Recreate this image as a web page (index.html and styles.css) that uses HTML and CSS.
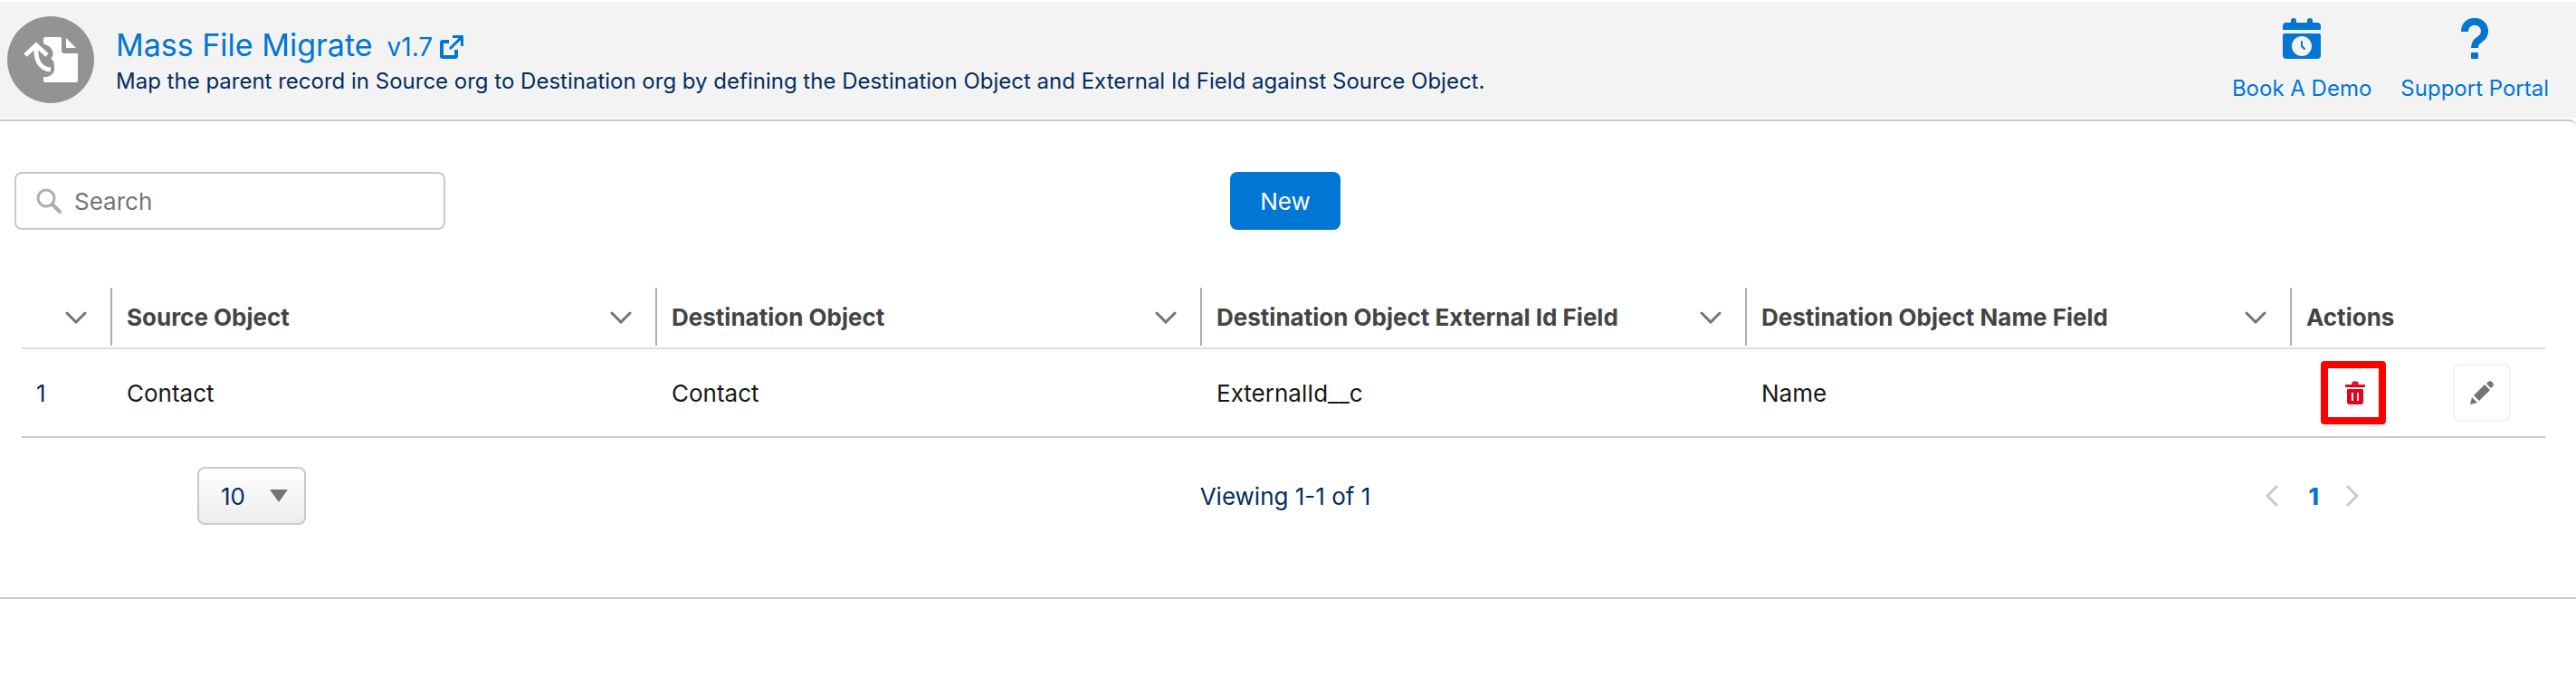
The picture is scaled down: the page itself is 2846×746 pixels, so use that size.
FILE: index.html
```html
<!DOCTYPE html>
<html lang="en">
<head>
  <meta charset="UTF-8">
  <meta name="viewport" content="width=device-width, initial-scale=1.0">
  <title>Mass File Migrate</title>
  <link rel="stylesheet" href="styles.css">
</head>
<body>

  <header class="page-header">
    <svg class="logo" viewBox="0 0 96 96" aria-hidden="true">
      <circle cx="48" cy="48" r="48" fill="#939393"/>
      <path d="M42 23h17q1 0 1 1v14q0 3 3 3h14q1 0 1 1v29q0 2-2 2H42q-2 0-2-2v-4c7 1 13-4 12-11 0-5-1-8-4-9 4-4 3-8 0-12-2-3-8-4-8-5V25q0-2 2-2z" fill="#fff"/>
      <path d="M65 24l11 11H66q-1 0-1-1z" fill="#fff"/>
      <path d="M20 43l12-11 12 11M33 36c-2 12 4 22 14 23" fill="none" stroke="#939393" stroke-width="11"/>
      <path d="M20 43l12-11 12 11M32 34c-1 14 4 24 16 25" fill="none" stroke="#fff" stroke-width="5"/>
    </svg>
    <div class="heading">
      <div class="title-row">
        <h1>Mass File Migrate</h1>
        <a href="#" class="version">v1.7
          <svg width="26" height="26" viewBox="0 0 26 26" aria-hidden="true">
            <path d="M10 7H3q-1 0-1 1v15q0 1 1 1h14q1 0 1-1v-7" fill="none" stroke="currentColor" stroke-width="4"/>
            <path d="M11 15L22 4" fill="none" stroke="currentColor" stroke-width="3"/>
            <path d="M14 0h11q1 0 1 1v11h-3V6l-3-3h-6z" fill="currentColor"/>
          </svg>
        </a>
      </div>
      <p>Map the parent record in Source org to Destination org by defining the Destination Object and External Id Field against Source Object.</p>
    </div>
    <nav class="links">
      <a href="#">
        <svg width="42" height="46" viewBox="0 0 42 46" aria-hidden="true">
          <path d="M0 13V9q0-4 4-4h5V3q0-3 3-3t3 3v2h12V3q0-3 3-3t3 3v2h5q4 0 4 4v4z" fill="currentColor"/>
          <path d="M2 17h38q2 0 2 2v22q0 4-4 4H4q-4 0-4-4V19q0-2 2-2z" fill="currentColor"/>
          <circle cx="21" cy="31" r="11" fill="#f3f3f3"/>
          <path d="M21 26v5l3 3" fill="none" stroke="currentColor" stroke-width="2" stroke-linecap="round"/>
        </svg>
        Book A Demo
      </a>
      <a href="#">
        <svg width="30" height="46" viewBox="0 0 30 46" aria-hidden="true">
          <path d="M4 15C4 0 26 0 26 15c0 10-11 7-11 18" fill="none" stroke="currentColor" stroke-width="8"/>
          <rect x="11" y="38" width="8" height="7" rx="1" fill="currentColor"/>
        </svg>
        Support Portal
      </a>
    </nav>
  </header>

  <main class="card">
    <div class="toolbar">
      <div class="search">
        <svg width="28" height="28" viewBox="0 0 28 28" aria-hidden="true">
          <circle cx="11" cy="11" r="9" fill="none" stroke="#aeaeae" stroke-width="3"/>
          <path d="M18 18l8 8" stroke="#aeaeae" stroke-width="4" stroke-linecap="round"/>
        </svg>
        <input type="search" placeholder="Search" aria-label="Search">
      </div>
      <button type="button" class="btn-new">New</button>
    </div>

    <table class="mappings">
      <colgroup>
        <col class="col-number">
        <col><col><col><col>
        <col class="col-actions">
      </colgroup>
      <thead>
        <tr>
          <th><div class="th"><svg class="chevron" viewBox="0 0 24 14"><path d="M2 2l10 10L22 2"/></svg></div></th>
          <th><div class="th">Source Object <svg class="chevron" viewBox="0 0 24 14"><path d="M2 2l10 10L22 2"/></svg></div></th>
          <th><div class="th">Destination Object <svg class="chevron" viewBox="0 0 24 14"><path d="M2 2l10 10L22 2"/></svg></div></th>
          <th><div class="th">Destination Object External Id Field <svg class="chevron" viewBox="0 0 24 14"><path d="M2 2l10 10L22 2"/></svg></div></th>
          <th><div class="th">Destination Object Name Field <svg class="chevron" viewBox="0 0 24 14"><path d="M2 2l10 10L22 2"/></svg></div></th>
          <th><div class="th th-last">Actions</div></th>
        </tr>
      </thead>
      <tbody>
        <tr>
          <td class="number">1</td>
          <td>Contact</td>
          <td>Contact</td>
          <td>ExternalId__c</td>
          <td>Name</td>
          <td class="actions-cell">
            <div class="actions">
              <button type="button" class="btn-delete" aria-label="Delete">
                <svg width="22" height="26" viewBox="0 0 22 26" aria-hidden="true">
                  <path d="M9 5V2h4v3" fill="none" stroke="currentColor" stroke-width="3" stroke-linejoin="round"/>
                  <rect y="4" width="22" height="3" rx="1" fill="currentColor"/>
                  <path d="M3 9h16q1 0 1 1v13q0 3-3 3H5q-3 0-3-3V10q0-1 1-1z" fill="currentColor"/>
                  <path d="M8 13v9M14 13v9" stroke="#fff" stroke-width="2"/>
                </svg>
              </button>
              <button type="button" class="btn-edit" aria-label="Edit">
                <svg width="26" height="26" viewBox="0 0 26 26" aria-hidden="true">
                  <path d="M0 26l2-8 6 6zM4 16L16 4l6 6L10 22zM18 3l2-2q2-2 4 0l1 1q2 2 0 4l-2 2z" fill="currentColor"/>
                </svg>
              </button>
            </div>
          </td>
        </tr>
      </tbody>
    </table>

    <div class="table-footer">
      <div class="page-size">
        <select aria-label="Rows per page">
          <option>10</option>
          <option>20</option>
          <option>50</option>
        </select>
        <svg width="20" height="14" viewBox="0 0 20 14" aria-hidden="true"><path d="M0 0h20L10 14z" fill="#747474"/></svg>
      </div>
      <span class="viewing">Viewing 1-1 of 1</span>
      <div class="pager">
        <button type="button" aria-label="Previous page"><svg width="14" height="24" viewBox="0 0 14 24"><path d="M12 2L2 12l10 10"/></svg></button>
        <button type="button" class="current">1</button>
        <button type="button" aria-label="Next page"><svg width="14" height="24" viewBox="0 0 14 24"><path d="M2 2l10 10L2 22"/></svg></button>
      </div>
    </div>
  </main>

</body>
</html>
```
FILE: styles.css
```css
* {
  box-sizing: border-box;
}

body {
  margin: 0;
  padding: 2px 0;
  font-family: Inter, "Liberation Sans", sans-serif;
  font-size: 26px;
  line-height: 36px;
  color: #032d60;
  background-color: #fff;
}

button,
input,
select {
  font: inherit;
}

a {
  color: #0176d3;
  text-decoration: none;
}

svg {
  flex: none;
}

.page-header {
  display: flex;
  align-items: center;
  height: 128px;
  margin-bottom: 2px;
  padding: 0 30px 0 8px;
  background-color: #f3f3f3;
}

.logo {
  width: 96px;
  height: 96px;
}

.heading {
  flex: 1;
  margin-left: 24px;
  padding-top: 4px;
}

.title-row {
  display: flex;
  align-items: baseline;
  gap: 16px;
}

h1 {
  margin: 0;
  font-size: 34px;
  font-weight: 400;
  line-height: 44px;
  color: #0176d3;
}

.version {
  display: flex;
  align-items: center;
  gap: 8px;
  font-size: 28px;
}

.heading p {
  margin: 0;
  font-size: 24px;
}

.links {
  display: flex;
  gap: 32px;
  padding-top: 4px;
}

.links a {
  display: flex;
  flex-direction: column;
  align-items: center;
  gap: 14px;
  font-size: 24px;
}

.card {
  border-top: 2px solid #c9c9c9;
  border-bottom: 2px solid #c9c9c9;
  border-top-right-radius: 8px;
  padding: 56px 0 80px;
}

.toolbar {
  display: grid;
  grid-template-columns: 1fr auto 1fr;
  padding: 0 22px 0 16px;
}

.search {
  display: flex;
  align-items: center;
  gap: 14px;
  width: 476px;
  height: 64px;
  padding: 0 22px;
  border: 2px solid #c9c9c9;
  border-radius: 8px;
}

.search input {
  flex: 1;
  min-width: 0;
  border: 0;
  padding: 2px 0 0;
  outline: 0;
  background: none;
}

.search input::placeholder {
  color: #747474;
}

.btn-new {
  width: 122px;
  height: 64px;
  padding: 2px 0 0;
  border: 0;
  border-radius: 8px;
  color: #fff;
  background-color: #0176d3;
}

.mappings {
  width: calc(100% - 58px);
  margin: 64px 34px 0 24px;
  border-collapse: separate;
  border-spacing: 0;
  table-layout: fixed;
}

.col-number {
  width: 100px;
}

.col-actions {
  width: 280px;
}

.mappings th {
  padding: 0 0 2px;
  border-bottom: 2px solid #ddd;
  font-weight: 700;
  text-align: left;
  color: #444;
}

.th {
  display: flex;
  align-items: center;
  height: 64px;
  padding: 2px 26px 0 16px;
  border-right: 2px solid #aeaeae;
}

.th-last {
  border-right: 0;
}

.chevron {
  width: 24px;
  height: 14px;
  margin-left: auto;
}

.chevron path {
  fill: none;
  stroke: #747474;
  stroke-width: 3;
  stroke-linecap: round;
}

.mappings td {
  height: 98px;
  padding: 2px 16px 0;
  border-bottom: 2px solid #c9c9c9;
  color: #181818;
}

.mappings td.number {
  color: #032d60;
}

.mappings td.actions-cell {
  padding-top: 0;
}

.actions {
  display: flex;
  align-items: center;
  justify-content: space-between;
  padding: 0 22px 0 16px;
}

.btn-delete,
.btn-edit {
  display: flex;
  align-items: center;
  justify-content: center;
  padding: 0;
  background-color: #fff;
}

.btn-delete {
  width: 72px;
  height: 70px;
  padding-left: 4px;
  border: 8px solid #f00;
  border-radius: 4px;
  color: #ea001e;
}

.btn-edit {
  width: 64px;
  height: 64px;
  border: 2px solid #f3f3f3;
  border-radius: 8px;
  color: #747474;
}

.table-footer {
  display: grid;
  grid-template-columns: 1fr auto 1fr;
  align-items: center;
  margin-top: 32px;
  padding: 0 224px 0 218px;
}

.page-size {
  display: flex;
  align-items: center;
}

.page-size select {
  appearance: none;
  width: 120px;
  height: 64px;
  padding: 2px 24px 0;
  border: 2px solid #c9c9c9;
  border-radius: 8px;
  color: #032d60;
  background: linear-gradient(#fff, #ececec);
}

.page-size svg {
  margin-left: -40px;
  pointer-events: none;
}

.viewing {
  padding-top: 2px;
}

.pager {
  display: flex;
  align-items: center;
  justify-content: flex-end;
  gap: 14px;
}

.pager button {
  display: flex;
  align-items: center;
  border: 0;
  padding: 0 16px;
  background: none;
}

.pager svg path {
  fill: none;
  stroke: #c9c9c9;
  stroke-width: 3;
  stroke-linecap: round;
}

.pager .current {
  padding: 2px 0 0 4px;
  font-weight: 800;
  color: #0176d3;
}
```
